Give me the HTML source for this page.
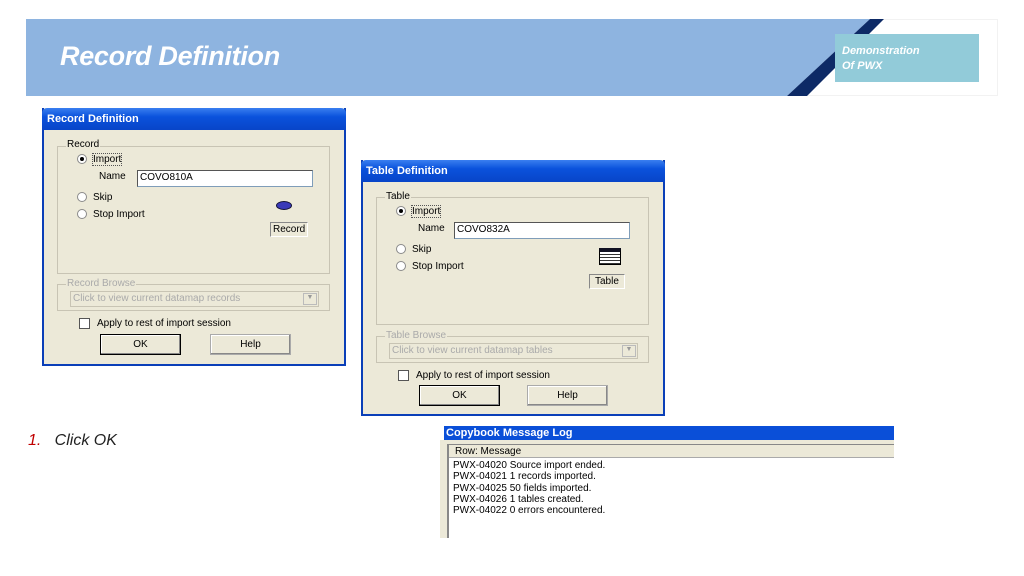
<!DOCTYPE html>
<html><head><meta charset="utf-8"><style>
*{margin:0;padding:0;box-sizing:border-box}
body{width:1024px;height:576px;background:#fff;position:relative;overflow:hidden;font-family:"Liberation Sans",sans-serif}
.a{position:absolute}
.dlg{position:absolute;width:304px;height:258px;background:#ece9d8;border:2px solid #0a3fb8;border-top:none;font-size:10px;color:#000}
.tb{position:absolute;left:-2px;top:0;width:304px;height:22px;background:linear-gradient(#3a7ff0,#0a52dc 40%,#0845c8);color:#fff;font-weight:bold;font-size:11px;padding:5px 0 0 5px;border-radius:5px 5px 0 0}
.grp{position:absolute;border:1px solid #c8c4b4}
.lg{position:absolute;background:#ece9d8;padding:0 1px;font-size:10px}
.rad{position:absolute;width:10px;height:10px;border-radius:50%;background:#fff;border:1px solid #8a8a8a}
.rad.on::after{content:"";position:absolute;left:2px;top:2px;width:4px;height:4px;border-radius:50%;background:#000}
.inp{position:absolute;background:#fff;border:1px solid #7f9db9;border-top-color:#555;border-left-color:#555;padding:1px 2px;font-size:10px}
.btn{position:absolute;border:1px solid #000;background:#ece9d8;box-shadow:inset -1px -1px #888,inset 1px 1px #fff;text-align:center;font-size:10px;padding-top:4px}
.t{position:absolute;white-space:nowrap}
</style></head><body>
<div class="a" style="left:26px;top:19px;width:972px;height:77px;background:#fff;border:1px solid #f2f2f2"></div>
<svg class="a" style="left:26px;top:19px" width="900" height="77"><polygon points="0,0 844,0 761,77 0,77" fill="#8eb4e0"/><polygon points="844,0 858,0 781,77 761,77" fill="#0d2a66"/></svg>
<div class="t" style="left:60px;top:41px;font-size:27px;font-weight:bold;font-style:italic;color:#fff;letter-spacing:-0.3px">Record Definition</div>
<div class="a" style="left:835px;top:34px;width:144px;height:48px;background:#92cbd9"></div>
<div class="t" style="left:842px;top:44px;font-size:11px;font-weight:bold;font-style:italic;color:#fff;line-height:15px">Demonstration<br>Of PWX</div>

<div class="dlg" style="left:42px;top:108px">
<div class="tb">Record Definition</div>
<div class="grp" style="left:13px;top:38px;width:273px;height:128px"></div>
<div class="lg" style="left:22px;top:31px">Record</div>
<div class="rad on" style="left:33px;top:46px"></div><div class="t" style="left:49px;top:46px;outline:1px dotted #555">Import</div>
<div class="t" style="left:55px;top:63px">Name</div><div class="inp" style="left:93px;top:62px;width:176px;height:17px">COVO810A</div>
<div class="rad" style="left:33px;top:84px"></div><div class="t" style="left:49px;top:84px">Skip</div>
<div class="rad" style="left:33px;top:101px"></div><div class="t" style="left:49px;top:101px">Stop Import</div>
<div class="a" style="left:232px;top:93px;width:16px;height:9px;border-radius:50%;background:#3a3ab8;border:1px solid #113"></div>
<div class="t" style="left:226px;top:114px;border:1px solid #fff;border-left-color:#888;border-top-color:#888;padding:1px 2px">Record</div>
<div class="grp" style="left:13px;top:176px;width:273px;height:27px"></div>
<div class="lg" style="left:22px;top:170px;color:#aaa">Record Browse</div>
<div class="inp" style="left:26px;top:183px;width:249px;height:16px;color:#aaa;background:#ece9d8;border-color:#c8c4b4">Click to view current datamap records</div>
<div class="a" style="left:259px;top:185px;width:14px;height:12px;border:1px solid #bbb;font-size:7px;color:#999;text-align:center">▼</div>
<div class="a" style="left:35px;top:210px;width:11px;height:11px;background:#fff;border:1px solid #555"></div>
<div class="t" style="left:53px;top:210px">Apply to rest of import session</div>
<div class="btn" style="left:56px;top:226px;width:81px;height:21px">OK</div>
<div class="btn" style="left:166px;top:226px;width:81px;height:21px;border-color:#aaa">Help</div>
</div>

<div class="dlg" style="left:361px;top:160px;height:256px">
<div class="tb">Table Definition</div>
<div class="grp" style="left:13px;top:37px;width:273px;height:128px"></div>
<div class="lg" style="left:22px;top:31px">Table</div>
<div class="rad on" style="left:33px;top:46px"></div><div class="t" style="left:49px;top:46px;outline:1px dotted #555">Import</div>
<div class="t" style="left:55px;top:63px">Name</div><div class="inp" style="left:91px;top:62px;width:176px;height:17px">COVO832A</div>
<div class="rad" style="left:33px;top:84px"></div><div class="t" style="left:49px;top:84px">Skip</div>
<div class="rad" style="left:33px;top:101px"></div><div class="t" style="left:49px;top:101px">Stop Import</div>
<div class="a" style="left:236px;top:88px;width:22px;height:17px;background:#fff;border:1px solid #000;border-top:4px solid #112;background:repeating-linear-gradient(#fff 0 2px,#333 2px 3px)"></div>
<div class="t" style="left:226px;top:114px;border:1px solid #fff;border-left-color:#888;border-top-color:#888;padding:1px 5px">Table</div>
<div class="grp" style="left:13px;top:176px;width:273px;height:27px"></div>
<div class="lg" style="left:22px;top:170px;color:#aaa">Table Browse</div>
<div class="inp" style="left:26px;top:183px;width:249px;height:16px;color:#aaa;background:#ece9d8;border-color:#c8c4b4">Click to view current datamap tables</div>
<div class="a" style="left:259px;top:185px;width:14px;height:12px;border:1px solid #bbb;font-size:7px;color:#999;text-align:center">▼</div>
<div class="a" style="left:35px;top:210px;width:11px;height:11px;background:#fff;border:1px solid #555"></div>
<div class="t" style="left:53px;top:210px">Apply to rest of import session</div>
<div class="btn" style="left:56px;top:225px;width:81px;height:21px">OK</div>
<div class="btn" style="left:164px;top:225px;width:81px;height:21px;border-color:#aaa">Help</div>
</div>

<div class="t" style="left:28px;top:432px;font-size:16px;font-style:italic;color:#222"><span style="color:#c00000">1.</span>&nbsp;&nbsp; Click OK</div>

<div class="a" style="left:444px;top:426px;width:450px;height:14px;background:#0a4fd8;color:#fff;font-weight:bold;font-size:11px;padding:1px 2px">Copybook Message Log</div>
<div class="a" style="left:440px;top:440px;width:454px;height:98px;background:#ece9d8"></div>
<div class="a" style="left:447px;top:444px;width:447px;height:94px;background:#fff;border-left:2px solid #888;border-top:1px solid #888"></div>
<div class="a" style="left:449px;top:445px;width:445px;height:13px;background:#ece9d8;border-bottom:1px solid #aaa;font-size:10px;padding:1px 6px">Row: Message</div>
<div class="t" style="left:453px;top:460px;font-size:10px;line-height:11.3px;color:#000">PWX-04020 Source import ended.<br>PWX-04021 1 records imported.<br>PWX-04025 50 fields imported.<br>PWX-04026 1 tables created.<br>PWX-04022 0 errors encountered.</div>
</body></html>
